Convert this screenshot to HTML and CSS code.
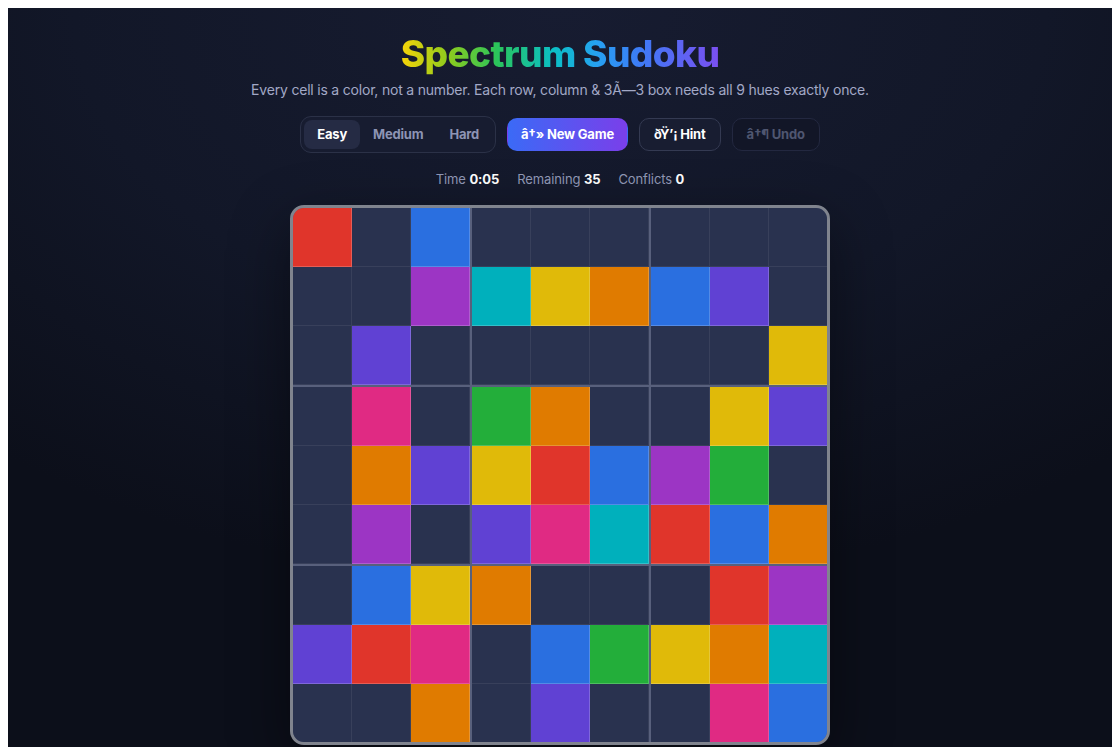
FILE: index.html
```html
<!DOCTYPE html>
<html>
	<head>
		<meta charset="utf-8">
		<title>Spectrum Sudoku</title>
		<link rel="stylesheet" href="styles.css">
	</head>
	<body>
	<div class="app">
		<h1 class="title">Spectrum Sudoku</h1>
		<p class="subtitle">Every cell is a color, not a number. Each row, column &amp; 3Ã—3 box needs all 9 hues exactly once.</p>

		<div class="controls">
			<div class="levels">
				<button class="level active">Easy</button>
				<button class="level">Medium</button>
				<button class="level">Hard</button>
			</div>
			<button class="btn primary">â†» New Game</button>
			<button class="btn">ðŸ’¡ Hint</button>
			<button class="btn disabled">â†¶ Undo</button>
		</div>

		<div class="stats">
			<span>Time <b>0:05</b></span>
			<span>Remaining <b>35</b></span>
			<span>Conflicts <b>0</b></span>
		</div>

		<div class="board" id="board"></div>
	</div>

	<script>
	// K = empty cell, letters are hues
	rows = [
		"RKBKKKKKK",
		"KKPTYOBVK",
		"KVKKKKKKY",
		"KMKGOKKYV",
		"KOVYRBPGK",
		"KPKVMTRBO",
		"KBYOKKKRP",
		"VRMKBGYOT",
		"KKOKVKKMB"
	];
	hues = {R:"red", B:"blue", P:"purple", T:"teal", Y:"yellow", O:"orange", V:"violet", M:"pink", G:"green", K:"empty"};
	board = document.getElementById("board");
	for(r = 0; r < 9; r++)
	{
		for(c = 0; c < 9; c++)
		{
			cell = document.createElement("div");
			cell.className = "cell " + hues[rows[r][c]] + " r" + (r+1) + " c" + (c+1);
			board.appendChild(cell);
		}
	}
	</script>
	</body>
</html>
```

FILE: styles.css
```css
body{font-family:Inter,"Noto Sans",sans-serif;}

.app{min-height:760px;padding:23px 20px 40px;display:flex;flex-direction:column;align-items:center;
	background:radial-gradient(ellipse 80% 70% at 50% 0%,#171c31 0%,#121728 55%,#0c0f1a 100%);color:#fff;}

.title{margin:0;font-size:37px;line-height:46px;font-weight:800;letter-spacing:-0.6px;
	background:linear-gradient(90deg,#f7d308 0%,#8ccb1e 15%,#2bc45a 30%,#0bbfc6 48%,#27a0f2 62%,#3d7bf6 75%,#7a4ff0 100%);
	-webkit-background-clip:text;background-clip:text;color:transparent;}

.subtitle{margin:3px 0 0;font-size:14px;line-height:20px;letter-spacing:-0.2px;color:#a2a8c6;}

.controls{display:flex;align-items:center;gap:11px;margin-top:16px;}

.levels{display:flex;padding:3px;border:1px solid #2b3147;border-radius:11px;background:#171c30;}

.level{font:700 13px/17px Inter,sans-serif;letter-spacing:-0.2px;padding:6px 13px;border:0;border-radius:8px;background:none;color:#8d94b4;}

.level.active{background:#252b44;color:#fff;}

.btn{font:700 13px/17px Inter,sans-serif;letter-spacing:-0.2px;padding:7px 14px;border:1px solid #343a52;border-radius:10px;background:#181d31;color:#fff;}

.btn.primary{border-color:transparent;padding:7px 13px;background:linear-gradient(90deg,#3b6af6,#7a3fea);}

.btn.disabled{border-color:#232840;background:#121627;color:#4f5670;}

.stats{display:flex;gap:18px;margin-top:17px;font-size:13px;line-height:18px;letter-spacing:-0.1px;color:#9198b6;}

.stats b{color:#fff;font-weight:700;}

.board{display:grid;grid-template-columns:repeat(9,auto);margin-top:17px;border:3px solid #80848e;border-radius:14px;
	overflow:hidden;background:#58607c;box-shadow:0 20px 60px rgba(0,0,0,.45);}

.cell{width:58px;height:58px;border-right:1px solid rgba(255,255,255,.2);border-bottom:1px solid rgba(255,255,255,.2);}

.c3,.c6{margin-right:2px;}
.r3,.r6{margin-bottom:2px;}
.c9{border-right:0;}
.r9{border-bottom:0;}

.empty{background:#29324f;border-color:rgba(255,255,255,.07);}
.red{background:#e0352b;}
.blue{background:#2a6fe0;}
.purple{background:#9c35c4;}
.teal{background:#00b0bc;}
.yellow{background:#e0ba09;}
.orange{background:#e07b00;}
.violet{background:#6041d3;}
.pink{background:#e02a83;}
.green{background:#23ae3a;}
```
